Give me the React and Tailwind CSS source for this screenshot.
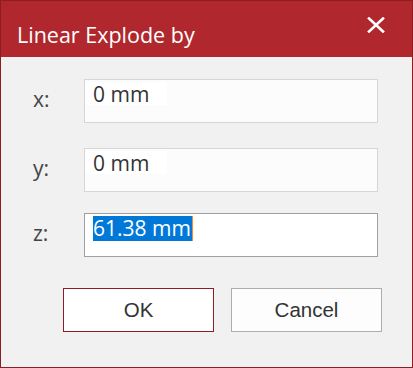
import React from "react";

function Field({ label, children, focused, mt }) {
  return (
    <div className={`flex items-start ${mt}`}>
      <div
        className="w-[51px] ml-[32px] pt-[6px] text-[21px] leading-[28px] text-[#444444]"
        style={{ fontFamily: '"Open Sans", sans-serif' }}
      >
        {label}
      </div>
      <div
        className={`w-[294px] h-[44px] border ${focused ? "border-[#a0a0a0] bg-white" : "border-[#d6d6d6] bg-[#fcfcfc]"} pt-[2px]`}
      >
        {children}
      </div>
    </div>
  );
}

export default function App() {
  const font = { fontFamily: '"Open Sans", sans-serif' };
  return (
    <div className="w-[413px] h-[368px] border border-[#8c1e22] flex flex-col bg-[#f1f1f1]">
      <div className="h-[56px] bg-[#b0282e] flex items-start justify-between">
        <div
          className="pl-[16px] pt-[20px] text-[21.5px] leading-[28px] text-white"
          style={font}
        >
          Linear Explode by
        </div>
        <svg
          className="mt-[16px] mr-[27px]"
          width="18"
          height="16"
          viewBox="0 0 18 16"
        >
          <path
            d="M2 1.5 L16 14.5 M16 1.5 L2 14.5"
            stroke="white"
            strokeWidth="2.6"
            strokeLinecap="square"
            fill="none"
          />
        </svg>
      </div>
      <div className="flex-1 flex flex-col pt-[22px]">
        <Field label="x:" mt="">
          <div className="h-[23px] mt-[3px] w-[82px] bg-white pl-[8px] text-[21px] leading-[25px] -translate-y-[3px] text-[#333333]" style={font}>
            0 mm
          </div>
        </Field>
        <Field label="y:" mt="mt-[25px]">
          <div className="h-[23px] mt-[3px] w-[82px] bg-white pl-[8px] text-[21px] leading-[25px] -translate-y-[3px] text-[#333333]" style={font}>
            0 mm
          </div>
        </Field>
        <Field label="z:" mt="mt-[21px]" focused>
          <div className="pl-[8px] flex items-start">
            <span
              className="bg-[#0078d7] text-white text-[21px] leading-[25px] pr-[1px]"
              style={font}
            >
              61.38 mm
            </span>
            <span className="w-[1px] h-[25px] bg-[#f28c28]" />
          </div>
        </Field>
        <div className="flex mt-[31px] ml-[62px] gap-[17px]">
          <div
            className="w-[151px] h-[44px] border border-[#8c1e22] bg-white flex items-center justify-center text-[20.5px] text-[#333333]"
            style={{ fontFamily: '"Liberation Sans", Arial, sans-serif' }}
          >
            OK
          </div>
          <div
            className="w-[151px] h-[44px] border border-[#adadad] bg-[#fdfdfd] flex items-center justify-center text-[20.5px] text-[#333333]"
            style={{ fontFamily: '"Liberation Sans", Arial, sans-serif' }}
          >
            Cancel
          </div>
        </div>
      </div>
    </div>
  );
}
